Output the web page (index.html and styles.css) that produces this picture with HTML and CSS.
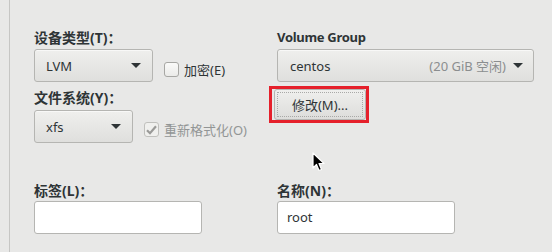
FILE: index.html
```html
<!DOCTYPE html>
<html lang="zh-CN">
<head>
  <meta charset="UTF-8">
  <title>手动分区</title>
  <link rel="stylesheet" href="styles.css">
</head>
<body>

<div class="page">
  <!-- top part: device type / filesystem | volume group -->
  <div class="section">
    <div class="col">
      <div class="field-label">设备类型(T)<span class="colon">：</span></div>
      <div class="row">
        <div class="combo combo-type">
          <span>LVM</span>
          <span class="arrow"></span>
        </div>
        <label class="check check-encrypt">
          <span class="box"></span>
          <span>加密(E)</span>
        </label>
      </div>

      <div class="field-label label-fs">文件系统(Y)<span class="colon">：</span></div>
      <div class="row row-fs">
        <div class="combo combo-fs">
          <span>xfs</span>
          <span class="arrow"></span>
        </div>
        <label class="check check-format disabled">
          <span class="box">
            <svg width="11" height="10" viewBox="0 0 11 10"><path d="M1 5.2 L4 8.2 L10 1.2" fill="none" stroke="#9a9a98" stroke-width="2.2"/></svg>
          </span>
          <span>重新格式化(O)</span>
        </label>
      </div>
    </div>

    <div class="col">
      <div class="field-label latin">Volume Group</div>
      <div class="combo combo-vg">
        <span>centos</span>
        <span class="spacer"></span>
        <span class="hint">(20 GiB 空闲)</span>
        <span class="arrow"></span>
      </div>
      <div class="btn-wrap">
        <button class="btn">修改(M)...</button>
        <div class="highlight"></div>
      </div>
    </div>
  </div>

  <!-- bottom part: label | name -->
  <div class="section section-bottom">
    <div class="col">
      <div class="field-label">标签(L)<span class="colon">：</span></div>
      <div class="entry entry-label"></div>
    </div>
    <div class="col">
      <div class="field-label">名称(N)<span class="colon">：</span></div>
      <div class="entry entry-name">root</div>
    </div>
  </div>

  <!-- mouse pointer -->
  <svg class="cursor" width="14" height="21" viewBox="0 0 14 21">
    <path d="M1 1 L1 16 L4.5 12.5 L7 18.5 L9.5 17.5 L7 11.5 L12 11.5 Z" fill="#000" stroke="#fff" stroke-width="1.2" stroke-linejoin="round"/>
  </svg>
</div>

</body>
</html>
```

FILE: styles.css
```css
/* base */
body {
  margin: 0;
  background-color: #e8e8e7;
  font-family: "Noto Sans", "Noto Sans CJK SC", sans-serif;
  font-size: 13px;
  color: #2e3436;
}

.page {
  position: relative;
  height: 252px;
  margin-left: 9px;
  border-left: 1px solid #c6c6c4;
  padding: 28px 0 0 24px;
  box-sizing: border-box;
}

.section {
  display: grid;
  grid-template-columns: 243px 1fr;
}

.section-bottom {
  margin-top: 38px;
}

.col {
  display: flex;
  flex-direction: column;
  align-items: flex-start;
}

.field-label {
  font-weight: bold;
  font-size: 14px;
  line-height: 18px;
  height: 18px;
}

.field-label.latin {
  font-size: 13px;
  letter-spacing: -0.3px;
}

.colon {
  font-family: "Noto Sans CJK JP", sans-serif;
}

.label-fs {
  margin-top: 6px;
}

.row {
  display: flex;
  align-items: flex-start;
  margin-top: 3px;
}

.row-fs {
  margin-top: 4px;
}

/* combo boxes */
.combo {
  display: flex;
  align-items: center;
  justify-content: space-between;
  height: 33px;
  box-sizing: border-box;
  padding: 0 11px;
  border: 1px solid #b5b5b2;
  border-radius: 3px;
  background: linear-gradient(#efefed, #dfdfdd);
  box-shadow: inset 0 1px #f8f8f7;
}

.combo-type {
  width: 119px;
}

.combo-fs {
  width: 99px;
}

.combo-vg {
  width: 257px;
  margin-top: 3px;
  padding: 0 10px 0 12px;
}

.combo-vg .spacer {
  flex: 1;
}

.hint {
  color: #8b8e8f;
  margin-right: 7px;
}

.arrow {
  width: 0;
  height: 0;
  border-left: 5px solid transparent;
  border-right: 5px solid transparent;
  border-top: 5px solid #2e3436;
}

/* check buttons */
.check {
  display: flex;
  align-items: center;
  gap: 5px;
  margin-left: 11px;
}

.check-encrypt {
  margin-top: 11px;
}

.check-format {
  margin-top: 10px;
}

.box {
  width: 15px;
  height: 15px;
  box-sizing: border-box;
  border: 1px solid #a7a7a4;
  border-radius: 3px;
  background: linear-gradient(#fafaf9, #ebebe9);
  display: flex;
  align-items: center;
  justify-content: center;
}

.disabled {
  color: #929595;
}

.disabled .box {
  border-color: #c0c0bd;
  background: #f0f0ee;
}

/* button with the red marker */
.btn-wrap {
  position: relative;
  margin-top: 7px;
  margin-left: -3px;
}

.btn {
  display: block;
  width: 92px;
  height: 31px;
  border: 1px solid #b5b5b2;
  border-radius: 3px;
  background: linear-gradient(#efefed, #dddddb);
  font-family: inherit;
  font-size: 13px;
  color: #2e3436;
  padding: 0;
  outline: 1px dotted #a9a9a7;
  outline-offset: -4px;
}

.highlight {
  position: absolute;
  left: -5px;
  top: -3px;
  width: 100px;
  height: 37px;
  box-sizing: border-box;
  border: 3px solid #e5202b;
}

/* entries */
.entry {
  height: 33px;
  box-sizing: border-box;
  margin-top: 2px;
  border: 1px solid #b5b5b2;
  border-radius: 3px;
  background-color: #ffffff;
  padding: 0 9px;
  line-height: 31px;
}

.entry-label {
  width: 168px;
}

.entry-name {
  width: 178px;
}

.cursor {
  position: absolute;
  left: 302px;
  top: 152px;
}
```
